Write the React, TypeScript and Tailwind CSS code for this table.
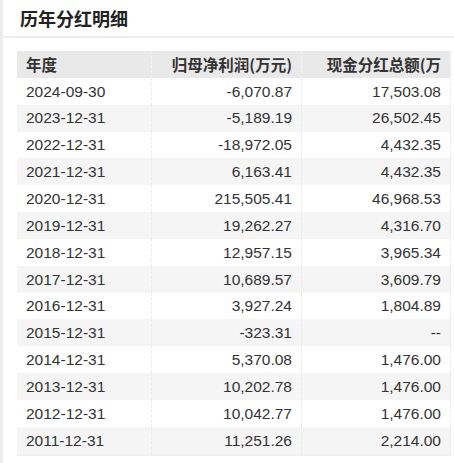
const rows: [string, string, string][] = [
  ["2024-09-30", "-6,070.87", "17,503.08"],
  ["2023-12-31", "-5,189.19", "26,502.45"],
  ["2022-12-31", "-18,972.05", "4,432.35"],
  ["2021-12-31", "6,163.41", "4,432.35"],
  ["2020-12-31", "215,505.41", "46,968.53"],
  ["2019-12-31", "19,262.27", "4,316.70"],
  ["2018-12-31", "12,957.15", "3,965.34"],
  ["2017-12-31", "10,689.57", "3,609.79"],
  ["2016-12-31", "3,927.24", "1,804.89"],
  ["2015-12-31", "-323.31", "--"],
  ["2014-12-31", "5,370.08", "1,476.00"],
  ["2013-12-31", "10,202.78", "1,476.00"],
  ["2012-12-31", "10,042.77", "1,476.00"],
  ["2011-12-31", "11,251.26", "2,214.00"],
];

export default function App() {
  return (
    <div
      className="flex h-[463px] w-[454px] overflow-hidden bg-[#ececec] text-[#333]"
      style={{ fontFamily: '"Liberation Sans", Arial, "Noto Sans CJK SC", sans-serif' }}
    >
      <div className="ml-[3px] flex-1 bg-white">
        {/* title */}
        <div className="flex h-[38px] items-center border-b-2 border-[#ececec] pl-[17px]">
          <h2
            className="text-[18px] font-bold leading-none text-[#222]"
            style={{ fontFamily: '"Noto Sans CJK SC", sans-serif' }}
          >
            历年分红明细
          </h2>
        </div>

        {/* table */}
        <div className="pl-[14px] pt-[13px]">
          <div className="w-[434px] border-b-2 border-[#f0f0f0] text-[15.5px]">
            <div
              className="grid h-[26.85px] grid-cols-[134px_150px_150px] items-center bg-[#e9e9e9] font-bold"
              style={{ fontFamily: '"Noto Sans CJK SC", sans-serif' }}
            >
              <div className="pl-[9px]">年度</div>
              <div className="flex h-full items-center justify-end border-l border-dashed border-[#f4f4f4] pr-[9px]">
                归母净利润(万元)
              </div>
              <div className="flex h-full items-center justify-end border-x border-dashed border-[#f4f4f4] pr-[9px]">
                现金分红总额(万
              </div>
            </div>
            {rows.map(([date, profit, cash], i) => (
              <div
                key={date}
                className={`grid h-[26.85px] grid-cols-[134px_150px_150px] items-center ${
                  i % 2 === 1 ? "bg-[#f5f5f5]" : "bg-white"
                }`}
              >
                <div className="pl-[9px]">{date}</div>
                <div className="flex h-full items-center justify-end border-l border-dashed border-[#ebebeb] pr-[9px]">
                  {profit}
                </div>
                <div className="flex h-full items-center justify-end border-x border-dashed border-[#ebebeb] pr-[9px]">
                  {cash}
                </div>
              </div>
            ))}
          </div>
        </div>
      </div>
    </div>
  );
}
